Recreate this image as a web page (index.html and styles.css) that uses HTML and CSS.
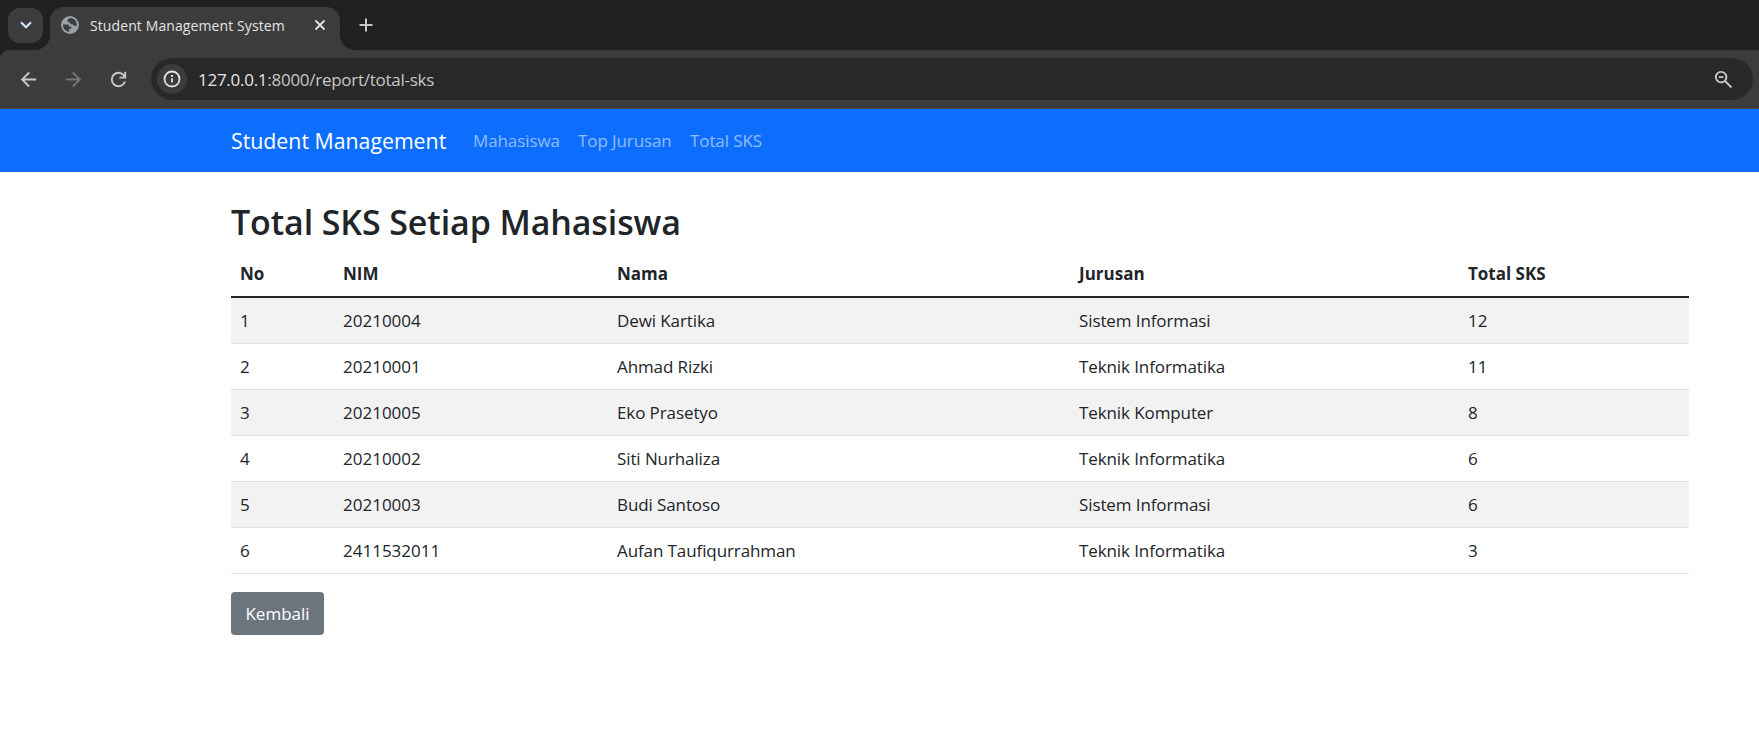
FILE: index.html
```html
<!DOCTYPE html>
<html lang="id">
<head>
  <meta charset="UTF-8">
  <meta name="viewport" content="width=device-width, initial-scale=1.0">
  <title>Student Management System</title>
  <link rel="stylesheet" href="styles.css">
</head>
<body>
  <header class="browser">
    <div class="tab-strip">
      <button class="tab-search" aria-label="Search tabs">
        <svg width="12" height="8" viewBox="0 0 12 8" fill="none" stroke="#d3e3fd" stroke-width="2.2"><path d="M1 1.2l5 5 5-5"/></svg>
      </button>
      <div class="tab">
        <svg class="favicon" width="18" height="18" viewBox="0 0 18 18">
          <circle cx="9" cy="9" r="9" fill="#9aa0a6"/>
          <path d="M10.2 2.1C6.9 2.600 6.200 3.800 6.600 5.200c.3 1.100 1.500 1.300 2.600 1.200v2c1.700-.2 3.300.2 3.800 1.400h2.900c.3-3.900-2.200-6.800-5.700-7.700z" fill="#3c3c3c"/>
          <path d="M2 8.600h3.800c1.700.1 2.600.8 2.700 2.200h1.900v2H8.200v3.100C4.600 15.600 2 12.500 2 8.600z" fill="#3c3c3c"/>
        </svg>
        <span class="tab-title">Student Management System</span>
        <svg class="tab-close" width="12" height="12" viewBox="0 0 12 12" stroke="#e3e3e3" stroke-width="1.800"><path d="M1.500 1.500l9 9M10.500 1.500l-9 9"/></svg>
      </div>
      <svg class="new-tab" width="14" height="14" viewBox="0 0 14 14" stroke="#c7c7c7" stroke-width="2"><path d="M7 .5v13M.5 7h13"/></svg>
    </div>
    <div class="toolbar">
      <svg class="tool" viewBox="0 0 24 24"><path d="M20 11H7.830l5.590-5.590L12 4l-8 8 8 8 1.410-1.410L7.830 13H20v-2z"/></svg>
      <svg class="tool tool-disabled" viewBox="0 0 24 24"><path d="M4 11h12.170l-5.590-5.590L12 4l8 8-8 8-1.410-1.410L16.170 13H4v-2z"/></svg>
      <svg class="tool tool-reload" viewBox="0 0 24 24"><path d="M12 20q-3.350 0-5.675-2.325T4 12t2.325-5.675T12 4q1.725 0 3.300.713T18 6.750V4h2v7h-7V9h4.200q-.8-1.400-2.188-2.200T12 6Q9.500 6 7.750 7.750T6 12t1.750 4.250T12 18q1.925 0 3.475-1.100T17.650 14h2.100q-.7 2.650-2.850 4.325T12 20Z"/></svg>
      <div class="omnibox">
        <span class="site-info">
          <svg width="18" height="18" viewBox="0 0 18 18" fill="none" stroke="#e3e3e3" stroke-width="1.800"><circle cx="9" cy="9" r="7.500"/><path d="M9 8.200v4.300M9 5v1.900"/></svg>
        </span>
        <span class="url"><span class="host">127.0.0.1</span>:8000/report/total-sks</span>
        <svg class="zoom-out" viewBox="0 0 24 24"><path d="M19.600 21l-6.300-6.300q-.75.6-1.725.95T9.500 16q-2.725 0-4.612-1.888T3 9.500q0-2.725 1.888-4.612T9.500 3q2.725 0 4.612 1.888T16 9.500q0 1.100-.35 2.075T14.700 13.300l6.300 6.300zM9.500 14q1.875 0 3.188-1.312T14 9.500t-1.312-3.187T9.500 5 6.313 6.313 5 9.500t1.313 3.188T9.500 14M7 10.500v-2h5v2z"/></svg>
      </div>
    </div>
  </header>

  <nav class="navbar">
    <a class="navbar-brand" href="#">Student Management</a>
    <a class="nav-link nav-mahasiswa" href="#">Mahasiswa</a>
    <a class="nav-link nav-jurusan" href="#">Top Jurusan</a>
    <a class="nav-link" href="#">Total SKS</a>
  </nav>

  <main class="container">
    <h2>Total SKS Setiap Mahasiswa</h2>
    <table class="table">
      <colgroup>
        <col class="col-no">
        <col class="col-nim">
        <col class="col-nama">
        <col class="col-jurusan">
        <col class="col-sks">
      </colgroup>
      <thead>
        <tr><th>No</th><th>NIM</th><th>Nama</th><th>Jurusan</th><th>Total SKS</th></tr>
      </thead>
      <tbody>
        <tr><td>1</td><td>20210004</td><td>Dewi Kartika</td><td>Sistem Informasi</td><td>12</td></tr>
        <tr><td>2</td><td>20210001</td><td>Ahmad Rizki</td><td>Teknik Informatika</td><td>11</td></tr>
        <tr><td>3</td><td>20210005</td><td>Eko Prasetyo</td><td>Teknik Komputer</td><td>8</td></tr>
        <tr><td>4</td><td>20210002</td><td>Siti Nurhaliza</td><td>Teknik Informatika</td><td>6</td></tr>
        <tr><td>5</td><td>20210003</td><td>Budi Santoso</td><td>Sistem Informasi</td><td>6</td></tr>
        <tr><td>6</td><td>2411532011</td><td>Aufan Taufiqurrahman</td><td>Teknik Informatika</td><td>3</td></tr>
      </tbody>
    </table>
    <a class="btn" href="#">Kembali</a>
  </main>
</body>
</html>
```
FILE: styles.css
```css
* {
  box-sizing: border-box;
}

body {
  margin: 0;
  font-family: "Segoe UI", "Open Sans", sans-serif;
  font-size: 17px;
  line-height: 27px;
  color: #212529;
  background-color: #fff;
  overflow: hidden;
}

a {
  text-decoration: none;
}

svg {
  display: block;
  flex: none;
}

/* Browser window */
.browser {
  background-color: #1f2120;
}

.tab-strip {
  display: flex;
  align-items: center;
  height: 50px;
  padding-left: 8px;
}

.tab-search {
  display: flex;
  align-items: center;
  justify-content: center;
  width: 35px;
  height: 35px;
  padding: 0;
  border: none;
  border-radius: 12px;
  background-color: #3c3c3c;
}

.tab {
  position: relative;
  display: flex;
  align-items: center;
  align-self: flex-end;
  width: 290px;
  height: 43px;
  margin-left: 7px;
  padding: 0 14px 7px 11px;
  border-radius: 14px 14px 0 0;
  background-color: #3c3c3c;
}

/* curved feet of the active tab */
.tab::before,
.tab::after {
  content: "";
  position: absolute;
  bottom: 0;
  width: 15px;
  height: 15px;
}

.tab::before {
  left: -15px;
  background: radial-gradient(circle at 0 0, transparent 14.5px, #3c3c3c 15.5px);
}

.tab::after {
  right: -15px;
  background: radial-gradient(circle at 100% 0, transparent 14.5px, #3c3c3c 15.5px);
}

.tab-title {
  flex: 1;
  margin-left: 11px;
  font-size: 14px;
  letter-spacing: .1px;
  color: #e3e3e3;
  white-space: nowrap;
}

.new-tab {
  margin-left: 19px;
}

.toolbar {
  display: flex;
  align-items: center;
  height: 59px;
  padding: 0 6px 0 17px;
  border-bottom: 1px solid #4a4a4a;
  border-top-left-radius: 9px;
  background-color: #3c3c3c;
}

.tool {
  width: 23px;
  height: 23px;
  margin-right: 22px;
  fill: #c7c7c7;
}

.tool-disabled {
  fill: #757575;
}

.tool-reload {
  margin-right: 21px;
}

.omnibox {
  display: flex;
  flex: 1;
  align-items: center;
  height: 42px;
  padding: 0 18px 0 6px;
  border-radius: 21px;
  background-color: #282828;
}

.site-info {
  display: flex;
  align-items: center;
  justify-content: center;
  width: 30px;
  height: 30px;
  border-radius: 50%;
  background-color: #3c3c3c;
}

.url {
  flex: 1;
  margin-left: 11px;
  letter-spacing: -.27px;
  color: #c7c7c7;
}

.host {
  color: #e3e3e3;
}

.zoom-out {
  width: 23px;
  height: 23px;
  fill: #c7c7c7;
}

/* Page */
.navbar {
  display: flex;
  align-items: center;
  height: 63px;
  padding-left: 231px;
  background-color: #0d6efd;
}

.navbar-brand {
  width: 216px;
  margin-right: 26px;
  font-size: 21.3px;
  color: #fff;
  white-space: nowrap;
}

.nav-link {
  margin-right: 18px;
  letter-spacing: -.1px;
  color: rgba(255, 255, 255, .55);
  white-space: nowrap;
}

.nav-mahasiswa {
  width: 87px;
}

.nav-jurusan {
  width: 94px;
}

.container {
  width: 1458px;
  margin-left: 231px;
  padding-top: 29px;
}

h2 {
  margin: 0 0 7px;
  font-size: 34px;
  font-weight: 600;
  line-height: 43px;
  letter-spacing: -.11px;
}

.table {
  width: 100%;
  margin-bottom: 18px;
  border-collapse: separate;
  border-spacing: 0;
  table-layout: fixed;
}

.col-no { width: 103px; }
.col-nim { width: 274px; }
.col-nama { width: 462px; }
.col-jurusan { width: 389px; }
.col-sks { width: 230px; }

th,
td {
  padding: 9px;
  text-align: left;
  border-bottom: 1px solid #dee2e6;
}

th {
  border-bottom: 2px solid #212529;
}

td:nth-child(3),
td:nth-child(4) {
  letter-spacing: -.1px;
}

tbody tr:nth-child(odd) {
  background-color: #f2f2f2;
}

.btn {
  display: inline-block;
  width: 93px;
  padding: 8px 0;
  border-radius: 4px;
  text-align: center;
  color: #fff;
  background-color: #6c757d;
}
```
